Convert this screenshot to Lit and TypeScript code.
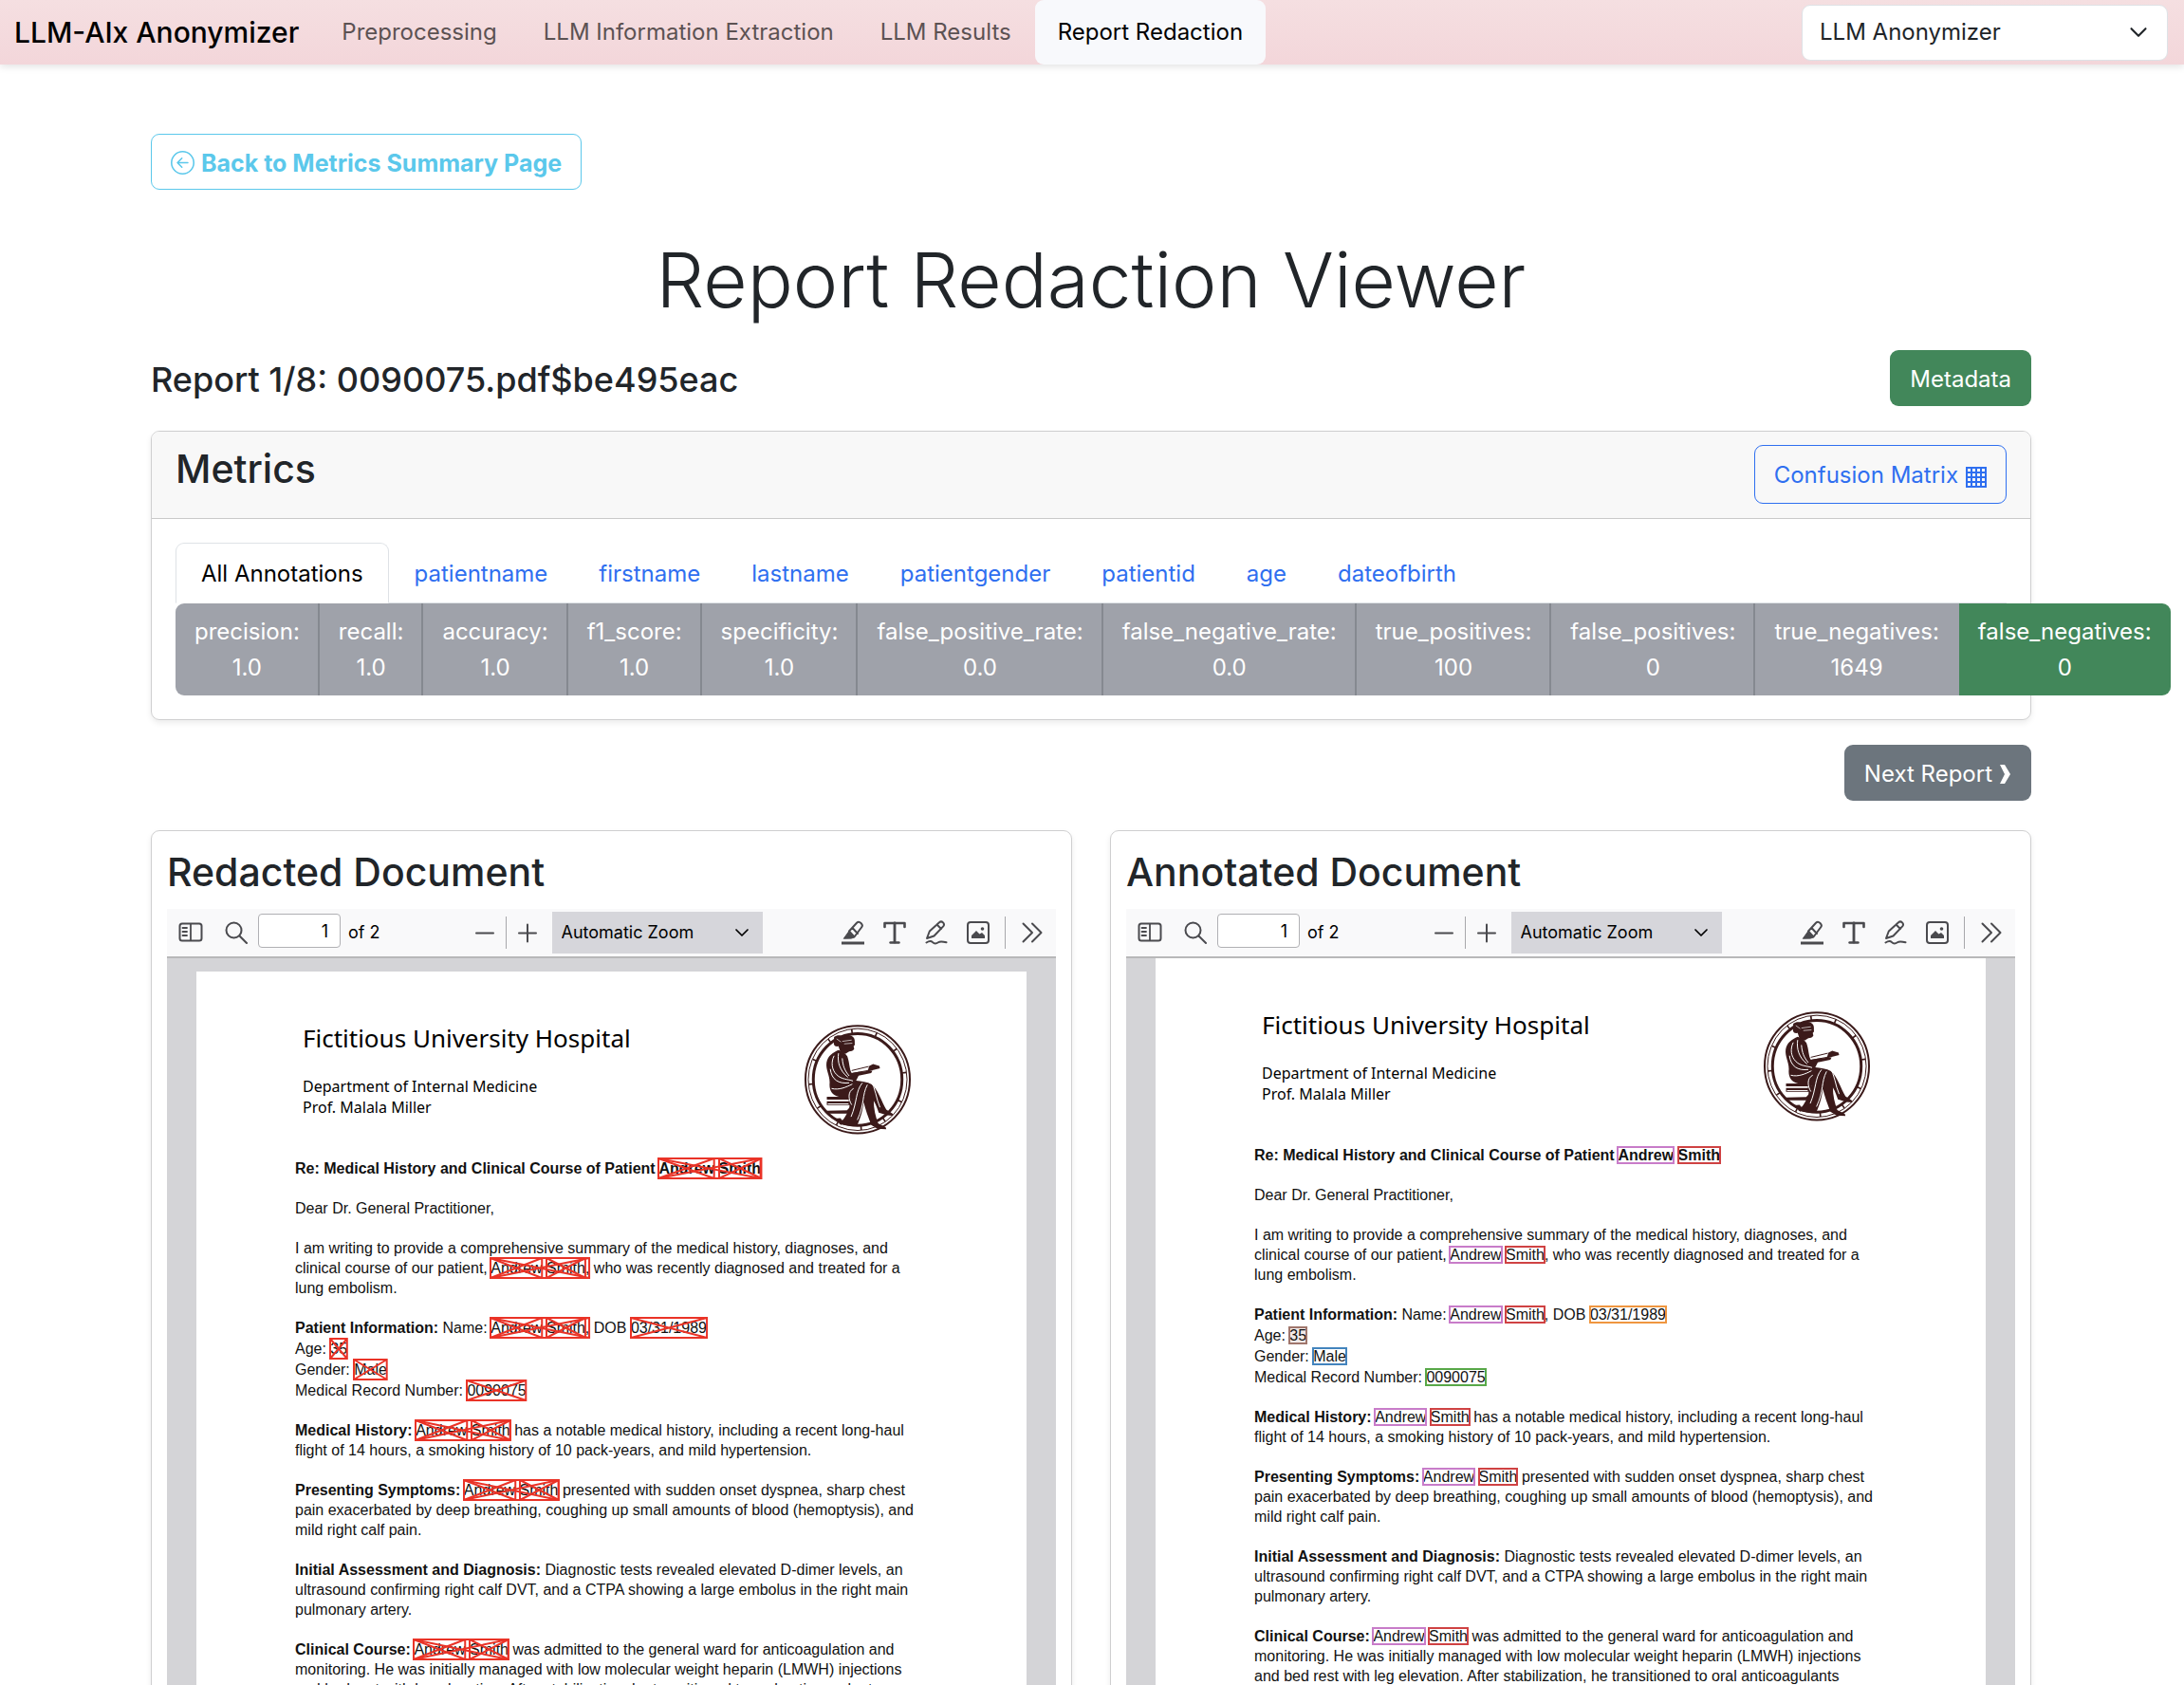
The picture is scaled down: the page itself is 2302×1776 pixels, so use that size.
import { LitElement, html, css, svg, nothing } from "lit";
import { customElement, property } from "lit/decorators.js";

type Tag = "first" | "last" | "dob" | "age" | "gender" | "id";
interface Mark { tag: Tag; text: string; }
interface Entity { marks: Mark[]; tail?: string; }
type Piece = string | { strong: string } | Entity;

const patient = (tail = ""): Entity => ({
  marks: [{ tag: "first", text: "Andrew" }, { tag: "last", text: "Smith" }],
  tail,
});
const single = (tag: Tag, text: string): Entity => ({ marks: [{ tag, text }] });

const LETTER: { kind: string; lines: Piece[][] }[] = [
  { kind: "subject", lines: [["Re: Medical History and Clinical Course of Patient ", patient()]] },
  { kind: "", lines: [["Dear Dr. General Practitioner,"]] },
  {
    kind: "",
    lines: [
      ["I am writing to provide a comprehensive summary of the medical history, diagnoses, and"],
      ["clinical course of our patient, ", patient(","), " who was recently diagnosed and treated for a"],
      ["lung embolism."],
    ],
  },
  {
    kind: "facts",
    lines: [
      [{ strong: "Patient Information:" }, " Name: ", patient(","), " DOB ", single("dob", "03/31/1989")],
      ["Age: ", single("age", "35")],
      ["Gender: ", single("gender", "Male")],
      ["Medical Record Number: ", single("id", "0090075")],
    ],
  },
  {
    kind: "",
    lines: [
      [{ strong: "Medical History:" }, " ", patient(), " has a notable medical history, including a recent long-haul"],
      ["flight of 14 hours, a smoking history of 10 pack-years, and mild hypertension."],
    ],
  },
  {
    kind: "",
    lines: [
      [{ strong: "Presenting Symptoms:" }, " ", patient(), " presented with sudden onset dyspnea, sharp chest"],
      ["pain exacerbated by deep breathing, coughing up small amounts of blood (hemoptysis), and"],
      ["mild right calf pain."],
    ],
  },
  {
    kind: "",
    lines: [
      [{ strong: "Initial Assessment and Diagnosis:" }, " Diagnostic tests revealed elevated D-dimer levels, an"],
      ["ultrasound confirming right calf DVT, and a CTPA showing a large embolus in the right main"],
      ["pulmonary artery."],
    ],
  },
  {
    kind: "",
    lines: [
      [{ strong: "Clinical Course:" }, " ", patient(), " was admitted to the general ward for anticoagulation and"],
      ["monitoring. He was initially managed with low molecular weight heparin (LMWH) injections"],
      ["and bed rest with leg elevation. After stabilization, he transitioned to oral anticoagulants"],
    ],
  },
];

const METRICS: [string, string][] = [
  ["precision:", "1.0"],
  ["recall:", "1.0"],
  ["accuracy:", "1.0"],
  ["f1_score:", "1.0"],
  ["specificity:", "1.0"],
  ["false_positive_rate:", "0.0"],
  ["false_negative_rate:", "0.0"],
  ["true_positives:", "100"],
  ["false_positives:", "0"],
  ["true_negatives:", "1649"],
  ["false_negatives:", "0"],
];

const TABS = ["All Annotations", "patientname", "firstname", "lastname", "patientgender", "patientid", "age", "dateofbirth"];
const NAV = ["Preprocessing", "LLM Information Extraction", "LLM Results", "Report Redaction"];

const chevron = html`<svg class="chevron" viewBox="0 0 16 16" aria-hidden="true">
  <path d="M2 5l6 6 6-6" fill="none" stroke="currentColor" stroke-width="1.700" stroke-linecap="round" stroke-linejoin="round" />
</svg>`;

const glyph = (content: unknown) => html`<svg class="glyph" viewBox="0 0 26 26" fill="none" stroke="currentColor"
  stroke-width="2" stroke-linecap="round" stroke-linejoin="round" aria-hidden="true">${content}</svg>`;

const ICONS = {
  sidebar: glyph(svg`<rect x="1.500" y="3.500" width="23" height="18" rx="2.500" /><path d="M13 4v17M4.500 8h4.500M4.500 12h4.500M4.500 16h4.500" stroke-width="1.800" />`),
  search: glyph(svg`<circle cx="10.500" cy="10.500" r="8" /><path d="M16.500 16.500L24 24" />`),
  minus: glyph(svg`<path d="M4 13.500h18" />`),
  plus: glyph(svg`<path d="M4 13.500h18M13 4.500v18" />`),
  highlight: glyph(svg`<path d="M1 24h24" stroke-width="3" stroke-linecap="butt" /><path d="M3.500 19l5-7 6 6-3 1z" fill="currentColor" stroke-width="1" /><path d="M9 11.500L17 2.800c1.200-1.200 3-1.200 4.500.2s1.700 3.200.5 4.500L14.500 17.500zM12.500 8l5.500 6" />`),
  text: glyph(svg`<path d="M2.500 7V3h21v4" stroke-width="2.600" /><path d="M13 3v20" stroke-width="2.800" /><path d="M8.500 23.500h9" stroke-width="2.400" />`),
  draw: glyph(svg`<path d="M3 19l2.800-7.500L16 2.200c1.200-1 2.800-1 4 .2s1.200 2.800.2 4L10.500 16.500zM13.500 4.500l4.500 4.500M2.500 23.500c3-2 5-2 6.500-.4s4 1.600 6 .2 4-1 8.500 0" />`),
  image: glyph(svg`<rect x="2" y="2" width="22" height="22" rx="3" /><path d="M6 19v-3l5-5 3.500 3.500L17 13l3 3v3z" fill="currentColor" stroke="none" /><circle cx="17.500" cy="9" r="1.800" fill="currentColor" stroke="none" />`),
  more: glyph(svg`<path d="M3.500 3.500L13 13l-9.500 9.500M13 3.500l9.500 9.500L13 22.500" />`),
};

const seal = html`<svg class="seal" viewBox="50 56 350 356" role="img" aria-label="Seated reader seal" fill="none" stroke="#3b1a1a">
  <ellipse cx="225" cy="233.500" rx="166" ry="171" stroke-width="6" />
  <ellipse cx="225" cy="233.500" rx="157" ry="162" stroke-width="3" />
  <ellipse cx="225" cy="233.500" rx="141" ry="146" stroke-width="9" />
  <ellipse cx="225" cy="233.500" rx="149" ry="154" stroke-width="14" stroke-dasharray="5 73" stroke-dashoffset="10" />
  <g fill="#3b1a1a" stroke="none">
    <path d="M150 98c10-8 22-6 28-1 14-8 30-6 36 6 3 7 1 14 2 20l-4 5 2 8c-4 7-10 8-16 8l-12 8-16-6-6-18c-10 2-16-4-15-12 0-8 1-12 1-18z" />
    <path d="M164 140c-18 8-34 18-38 40-3 22 10 40 10 62-2 22 4 36 22 44 20 8 38 4 50 10-6 20-18 60-42 78 14 6 42 8 58 4 10-20 18-50 20-72 6 24 14 46 24 72l20 12 28 2-2-7-24-12c-8-22-14-46-14-72 8 14 12 26 16 38l28 8 16 2 2-6-22-14c-14-24-28-66-46-80-14-8-34-10-50-12l8-16 40-8 4-8-44 4-22 4c-8-14-6-32-14-54-8-10-18-16-28-19z" />
    <path d="M127 288h64l18 8 4 22-4 24H127l-2-9 66-2 8-8v-8h-72v-12h70v-6h-70z" />
    <path d="M262 190l12-6 20 6 2 8-24 6-16 4z" />
    <path d="M152 358l18-2 12 14-10 8z" />
  </g>
  <path d="M206 205l54-13M208 214l60-11" stroke-width="3" />
  <g stroke="#fff" stroke-width="3">
    <path d="M150 158c-10 20-8 44 8 60s36 14 52 20M164 150c-4 28 4 56 30 76M176 166c2 24 8 40 22 56M138 200c4 34 26 48 60 44M142 262c24 6 46-4 66-14" />
    <path d="M240 244c-22 26-16 60-36 108M256 250c-18 34-8 60-32 112M212 262c-20 10-16 36-6 52M266 236c16 24 18 60 30 86" />
    <path d="M158 104l14 10M176 112l30-4M182 120l26-2" stroke-width="2" />
    <path d="M130 311h66M130 329h62" />
  </g>
</svg>`;

/** One PDF pane: toolbar and the letter page, with entities either struck out or outlined. */
@customElement("pdf-viewer")
class PdfViewer extends LitElement {
  @property() mode: "redacted" | "annotated" = "redacted";

  static styles = css`
    :host { display: block; color: #000; font: 18px/24px Inter, sans-serif; }
    * { box-sizing: border-box; }
    .toolbar {
      display: grid; grid-template-columns: 1fr auto 1fr; align-items: center;
      height: 52px; background: #f9f9fa; border-bottom: 2px solid #b8b8b9; color: #000;
    }
    .group { display: flex; align-items: center; }
    .start { padding-left: 12px; }
    .middle { padding-left: 12px; }
    .end { justify-content: flex-end; gap: 18px; padding-right: 12px; }
    .tool { display: flex; padding: 0; border: 0; background: none; color: #4a4a4e; }
    .glyph { width: 26px; height: 26px; }
    .find { margin-left: 22px; }
    .page-number {
      width: 87px; height: 36px; margin: 0 8px 4px 10px; padding: 0 12px; text-align: right;
      font: inherit; color: #000; background: #fff; border: 1px solid #b0b0b4; border-radius: 4px;
    }
    .rule { width: 1px; height: 34px; background: #a8a8ab; }
    .middle .rule { margin: 0 9px; }
    .end .rule { margin: 0 -3px; }
    .zoom { position: relative; display: block; margin-left: 13px; }
    .zoom select {
      appearance: none; display: block; width: 222px; height: 44px; padding: 0 10px;
      border: 0; border-radius: 0; background: #d6d6db; color: #000; font: inherit;
    }
    .zoom .chevron { position: absolute; right: 14px; top: 14px; width: 16px; height: 16px; pointer-events: none; }
    .desk { padding: 0 31px; background: #d4d4d7; }
    .desk.redacted { padding-top: 14px; }
    .page { min-height: 1200px; padding: 50px 104px; background: #fff; }
    .letterhead {
      display: flex; justify-content: space-between; padding: 0 16px 0 8px; margin-bottom: 23px;
      font-family: "Noto Sans", "Open Sans", sans-serif;
    }
    .hospital { margin: 0 0 20px; font-size: 26px; line-height: 40px; font-weight: 400; }
    .sender { margin: 0; font-size: 16px; line-height: 22px; }
    .seal { width: 116px; height: 120px; margin-top: 4px; }
    .para { margin: 0 0 21px; font: 16px/21px "Liberation Sans", Arial, sans-serif; color: #111; white-space: nowrap; }
    .para.subject { font-weight: 700; }
    .para.facts { margin-bottom: 20px; line-height: 22px; }
    .line { display: block; }
    .struck { position: relative; }
    .cross { position: absolute; left: 0; top: -2px; width: 100%; height: 21px; overflow: visible; color: #ea3327; pointer-events: none; }
    .mark { outline: 2px solid; outline-offset: -1px; }
    .mark span { color: #111; }
    .first { color: #c87cc9; }
    .last { color: #cf4243; }
    .dob { color: #ef9640; }
    .age { color: #a0766c; background: #f1e9e7; }
    .gender { color: #4384bd; }
    .id { color: #58a848; }
  `;

  private cross() {
    return html`<svg class="cross" viewBox="0 0 100 21" preserveAspectRatio="none" aria-hidden="true">
      <path d="M0 0h100v21H0zM0 0l100 21M100 0L0 21" fill="none" stroke="currentColor" stroke-width="2" vector-effect="non-scaling-stroke" />
    </svg>`;
  }

  private piece(p: Piece) {
    if (typeof p === "string") return p;
    if ("strong" in p) return html`<strong>${p.strong}</strong>`;
    if (this.mode === "annotated") {
      return html`${p.marks.map((m, i) => html`${i ? " " : nothing}<span class="mark ${m.tag}"><span>${m.text}</span></span>`)}${p.tail}`;
    }
    if (p.marks.length === 1) return html`<span class="struck">${p.marks[0].text}${this.cross()}</span>`;
    return html`<span class="struck">${p.marks.map((m, i) => html`${i ? " " : nothing}<span class="struck">${m.text}${this.cross()}</span>`)}${p.tail}${this.cross()}</span>`;
  }

  render() {
    return html`
      <div class="toolbar">
        <div class="group start">
          <button class="tool" type="button" aria-label="Toggle sidebar">${ICONS.sidebar}</button>
          <button class="tool find" type="button" aria-label="Find">${ICONS.search}</button>
          <input class="page-number" aria-label="Page" value="1" />
          <span>of 2</span>
        </div>
        <div class="group middle">
          <button class="tool" type="button" aria-label="Zoom out">${ICONS.minus}</button>
          <span class="rule"></span>
          <button class="tool" type="button" aria-label="Zoom in">${ICONS.plus}</button>
          <label class="zoom">
            <select aria-label="Zoom"><option>Automatic Zoom</option></select>
            ${chevron}
          </label>
        </div>
        <div class="group end">
          <button class="tool" type="button" aria-label="Highlight">${ICONS.highlight}</button>
          <button class="tool" type="button" aria-label="Text">${ICONS.text}</button>
          <button class="tool" type="button" aria-label="Draw">${ICONS.draw}</button>
          <button class="tool" type="button" aria-label="Add image">${ICONS.image}</button>
          <span class="rule"></span>
          <button class="tool" type="button" aria-label="More tools">${ICONS.more}</button>
        </div>
      </div>
      <div class="desk ${this.mode}">
        <article class="page">
          <header class="letterhead">
            <div>
              <h3 class="hospital">Fictitious University Hospital</h3>
              <p class="sender">Department of Internal Medicine<br />Prof. Malala Miller</p>
            </div>
            ${seal}
          </header>
          ${LETTER.map((para) => html`<p class="para ${para.kind}">${para.lines.map((line) => html`<span class="line">${line.map((p) => this.piece(p))}</span>`)}</p>`)}
        </article>
      </div>
    `;
  }
}

@customElement("app-root")
class AppRoot extends LitElement {
  static styles = css`
    :host {
      display: block; height: 100vh; overflow: hidden; background: #fff; color: #212529;
      font: 24px/38px Inter, sans-serif;
    }
    * { box-sizing: border-box; }
    a { text-decoration: none; }
    h1, h2, h3 { margin: 0; font-weight: 500; }
    .navbar {
      display: flex; align-items: center; gap: 1px; height: 68px; padding: 0 17px 0 15px;
      background: linear-gradient(#f5dfe1, #f3d6da); box-shadow: 0 2px 8px rgba(0, 0, 0, 0.12);
    }
    .brand { margin-right: 20px; font-size: 30px; font-weight: 500; color: #000; }
    .nav-link { padding: 15px 24px; color: #5c5253; }
    .nav-link.active { background: #f8f9fc; color: #000; border-radius: 9px; }
    .mode { position: relative; display: block; margin-left: auto; }
    .mode select {
      appearance: none; display: block; width: 386px; height: 59px; padding: 0 18px;
      border: 1px solid #dee2e6; border-radius: 9px; background: #fff; color: #212529; font: inherit;
    }
    .mode .chevron { position: absolute; right: 21px; top: 19px; width: 20px; height: 20px; pointer-events: none; }
    main { padding: 73px 161px 0 159px; }
    .button {
      display: inline-flex; align-items: center; height: 59px; padding: 2px 20px 0;
      border: 1px solid transparent; border-radius: 9px; font: inherit; background: none;
    }
    .back { gap: 7px; border-color: #5bc8eb; color: #5bc8eb; font-size: 25px; font-weight: 700; }
    .back svg { width: 25px; height: 25px; }
    .title { margin: 43px 0 23px; text-align: center; font-size: 80px; line-height: 103px; font-weight: 300; }
    .report-row { display: flex; justify-content: space-between; align-items: center; margin-bottom: 26px; }
    .report-name { padding-top: 2px; font-size: 36px; line-height: 44px; }
    .success { background: #42875a; color: #fff; }
    .card { border: 1px solid #cfcfd0; border-radius: 9px; box-shadow: 0 3px 6px rgba(0, 0, 0, 0.08); }
    .card-head {
      display: flex; justify-content: space-between; align-items: flex-start; padding: 14px 25px 15px;
      background: #f8f8f8; border-bottom: 1px solid #cacaca; border-radius: 8px 8px 0 0;
    }
    .card-title { font-size: 41px; line-height: 51px; }
    .confusion { gap: 8px; height: 62px; border-color: #2f6ff0; color: #2f6ff0; }
    .confusion svg { width: 22px; height: 22px; margin-top: 4px; }
    .card-body { padding: 25px; }
    .tabs { display: flex; border-bottom: 1px solid #dee2e6; }
    .tab {
      height: 64px; margin-bottom: -1px; padding: 2px 26px 0; border: 1px solid transparent; border-radius: 9px 9px 0 0;
      background: none; color: #2f6ff0; font: inherit;
    }
    .tab.active { background: #fff; border-color: #dee2e6 #dee2e6 #fff; color: #000; }
    .metrics { display: flex; width: max-content; }
    .metric {
      padding: 11px 19px 10px 20px; border: 0; border-right: 2px solid #858990; background: #9fa2aa; color: #fff;
      font: inherit; text-align: center;
    }
    .metric span { display: block; }
    .metric:first-child { border-radius: 9px 0 0 9px; }
    .metric:nth-last-child(2) { border-right-color: transparent; }
    .metric:last-child { border-right: 0; padding-right: 20px; border-radius: 0 9px 9px 0; background: #42875a; }
    .pager { display: flex; justify-content: flex-end; margin: 26px 0 31px; }
    .next { gap: 7px; background: #6c757d; color: #fff; }
    .next svg { width: 13px; height: 20px; }
    .documents { display: grid; grid-template-columns: 1fr 1fr; gap: 40px; }
    .document { padding: 18px 16px; }
    .document .card-title { margin-bottom: 13px; }
  `;

  render() {
    return html`
      <nav class="navbar">
        <a class="brand" href="#">LLM-AIx Anonymizer</a>
        ${NAV.map((n) => html`<a class="nav-link ${n === "Report Redaction" ? "active" : ""}" href="#">${n}</a>`)}
        <label class="mode">
          <select aria-label="Mode"><option>LLM Anonymizer</option></select>
          ${chevron}
        </label>
      </nav>
      <main>
        <a class="button back" href="#">
          <svg viewBox="0 0 16 16" fill="none" stroke="currentColor" stroke-linecap="round" stroke-linejoin="round" aria-hidden="true">
            <circle cx="8" cy="8" r="7.500" /><path d="M11.500 8h-7M7.500 5l-3 3 3 3" />
          </svg>
          Back to Metrics Summary Page
        </a>
        <h1 class="title">Report Redaction Viewer</h1>
        <div class="report-row">
          <h2 class="report-name">Report 1/8: 0090075.pdf$be495eac</h2>
          <button class="button success" type="button">Metadata</button>
        </div>
        <section class="card">
          <header class="card-head">
            <h2 class="card-title">Metrics</h2>
            <button class="button confusion" type="button">
              Confusion Matrix
              <svg viewBox="0 0 22 22" fill="none" stroke="currentColor" stroke-width="2" aria-hidden="true">
                <path d="M1 1h20v20H1zM1 6h20M1 11h20M1 16h20M6 1v20M11 1v20M16 1v20" />
              </svg>
            </button>
          </header>
          <div class="card-body">
            <div class="tabs" role="tablist">
              ${TABS.map((t, i) => html`<button class="tab ${i ? "" : "active"}" type="button" role="tab" aria-selected=${i ? "false" : "true"}>${t}</button>`)}
            </div>
            <div class="metrics">
              ${METRICS.map(([name, value]) => html`<button class="metric" type="button"><span>${name}</span><span>${value}</span></button>`)}
            </div>
          </div>
        </section>
        <div class="pager">
          <a class="button next" href="#">Next Report
            <svg viewBox="0 0 13 20" fill="currentColor" aria-hidden="true"><path d="M1 0h5l6 10-6 10H1l5-10z" /></svg>
          </a>
        </div>
        <div class="documents">
          <section class="card document">
            <h2 class="card-title">Redacted Document</h2>
            <pdf-viewer mode="redacted"></pdf-viewer>
          </section>
          <section class="card document">
            <h2 class="card-title">Annotated Document</h2>
            <pdf-viewer mode="annotated"></pdf-viewer>
          </section>
        </div>
      </main>
    `;
  }
}
